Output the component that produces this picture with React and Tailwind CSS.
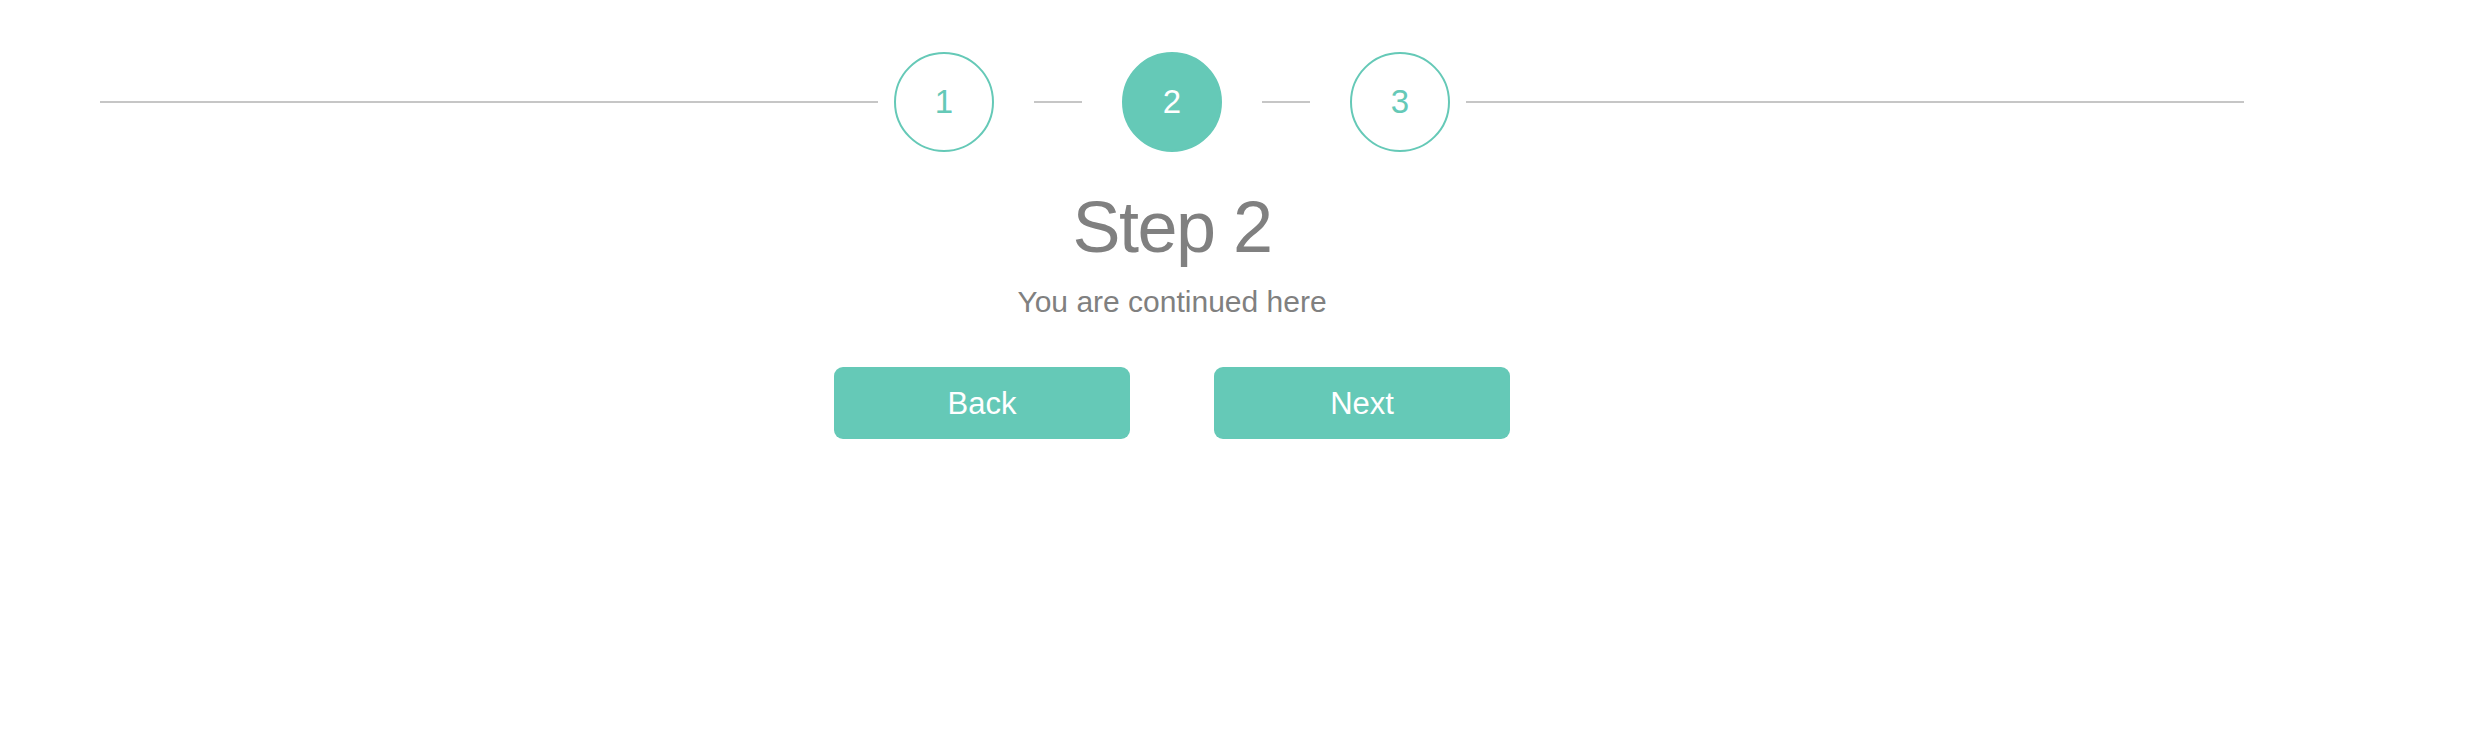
import React, { useState } from "react";

const steps = [
  { n: 1, title: "Step 1", text: "You are starting here" },
  { n: 2, title: "Step 2", text: "You are continued here" },
  { n: 3, title: "Step 3", text: "You are finished here" },
];

const StepCircle = ({ n, active }) => (
  <div
    className={`w-[100px] h-[100px] shrink-0 rounded-full border-2 border-[#65c9b7] flex items-center justify-center text-[33px] ${
      active ? "bg-[#65c9b7] text-white" : "bg-white text-[#65c9b7]"
    }`}
  >
    {n}
  </div>
);

export default function App() {
  const [current, setCurrent] = useState(2);
  const step = steps[current - 1];

  return (
    <div className="w-full h-[738px] bg-white font-['Liberation_Sans',Helvetica,Arial,sans-serif]">
      <div className="w-[2144px] ml-[100px] pt-[52px]">
        {/* Progress */}
        <div className="flex items-center">
          <div className="flex-1 h-[2px] mr-[16px] bg-[#c6c6c6]" />
          <StepCircle n={1} active={current === 1} />
          <div className="w-[48px] mx-[40px] h-[2px] bg-[#c6c6c6]" />
          <StepCircle n={2} active={current === 2} />
          <div className="w-[48px] mx-[40px] h-[2px] bg-[#c6c6c6]" />
          <StepCircle n={3} active={current === 3} />
          <div className="flex-1 h-[2px] ml-[16px] bg-[#c6c6c6]" />
        </div>

        {/* Content */}
        <h1 className="mt-[39px] text-center text-[72px] leading-[72px] text-[#808080] tracking-[-1.5px]">
          {step.title}
        </h1>
        <p className="mt-[24px] text-center text-[30px] leading-[30px] text-[#808080]">
          {step.text}
        </p>

        {/* Buttons */}
        <div className="mt-[50px] flex justify-center gap-[84px]">
          <button
            className="w-[296px] h-[72px] pt-[3px] rounded-[9px] bg-[#65c9b7] text-white text-[31px]"
            onClick={() => setCurrent(Math.max(1, current - 1))}
          >
            Back
          </button>
          <button
            className="w-[296px] h-[72px] pt-[3px] rounded-[9px] bg-[#65c9b7] text-white text-[31px]"
            onClick={() => setCurrent(Math.min(3, current + 1))}
          >
            Next
          </button>
        </div>
      </div>
    </div>
  );
}
